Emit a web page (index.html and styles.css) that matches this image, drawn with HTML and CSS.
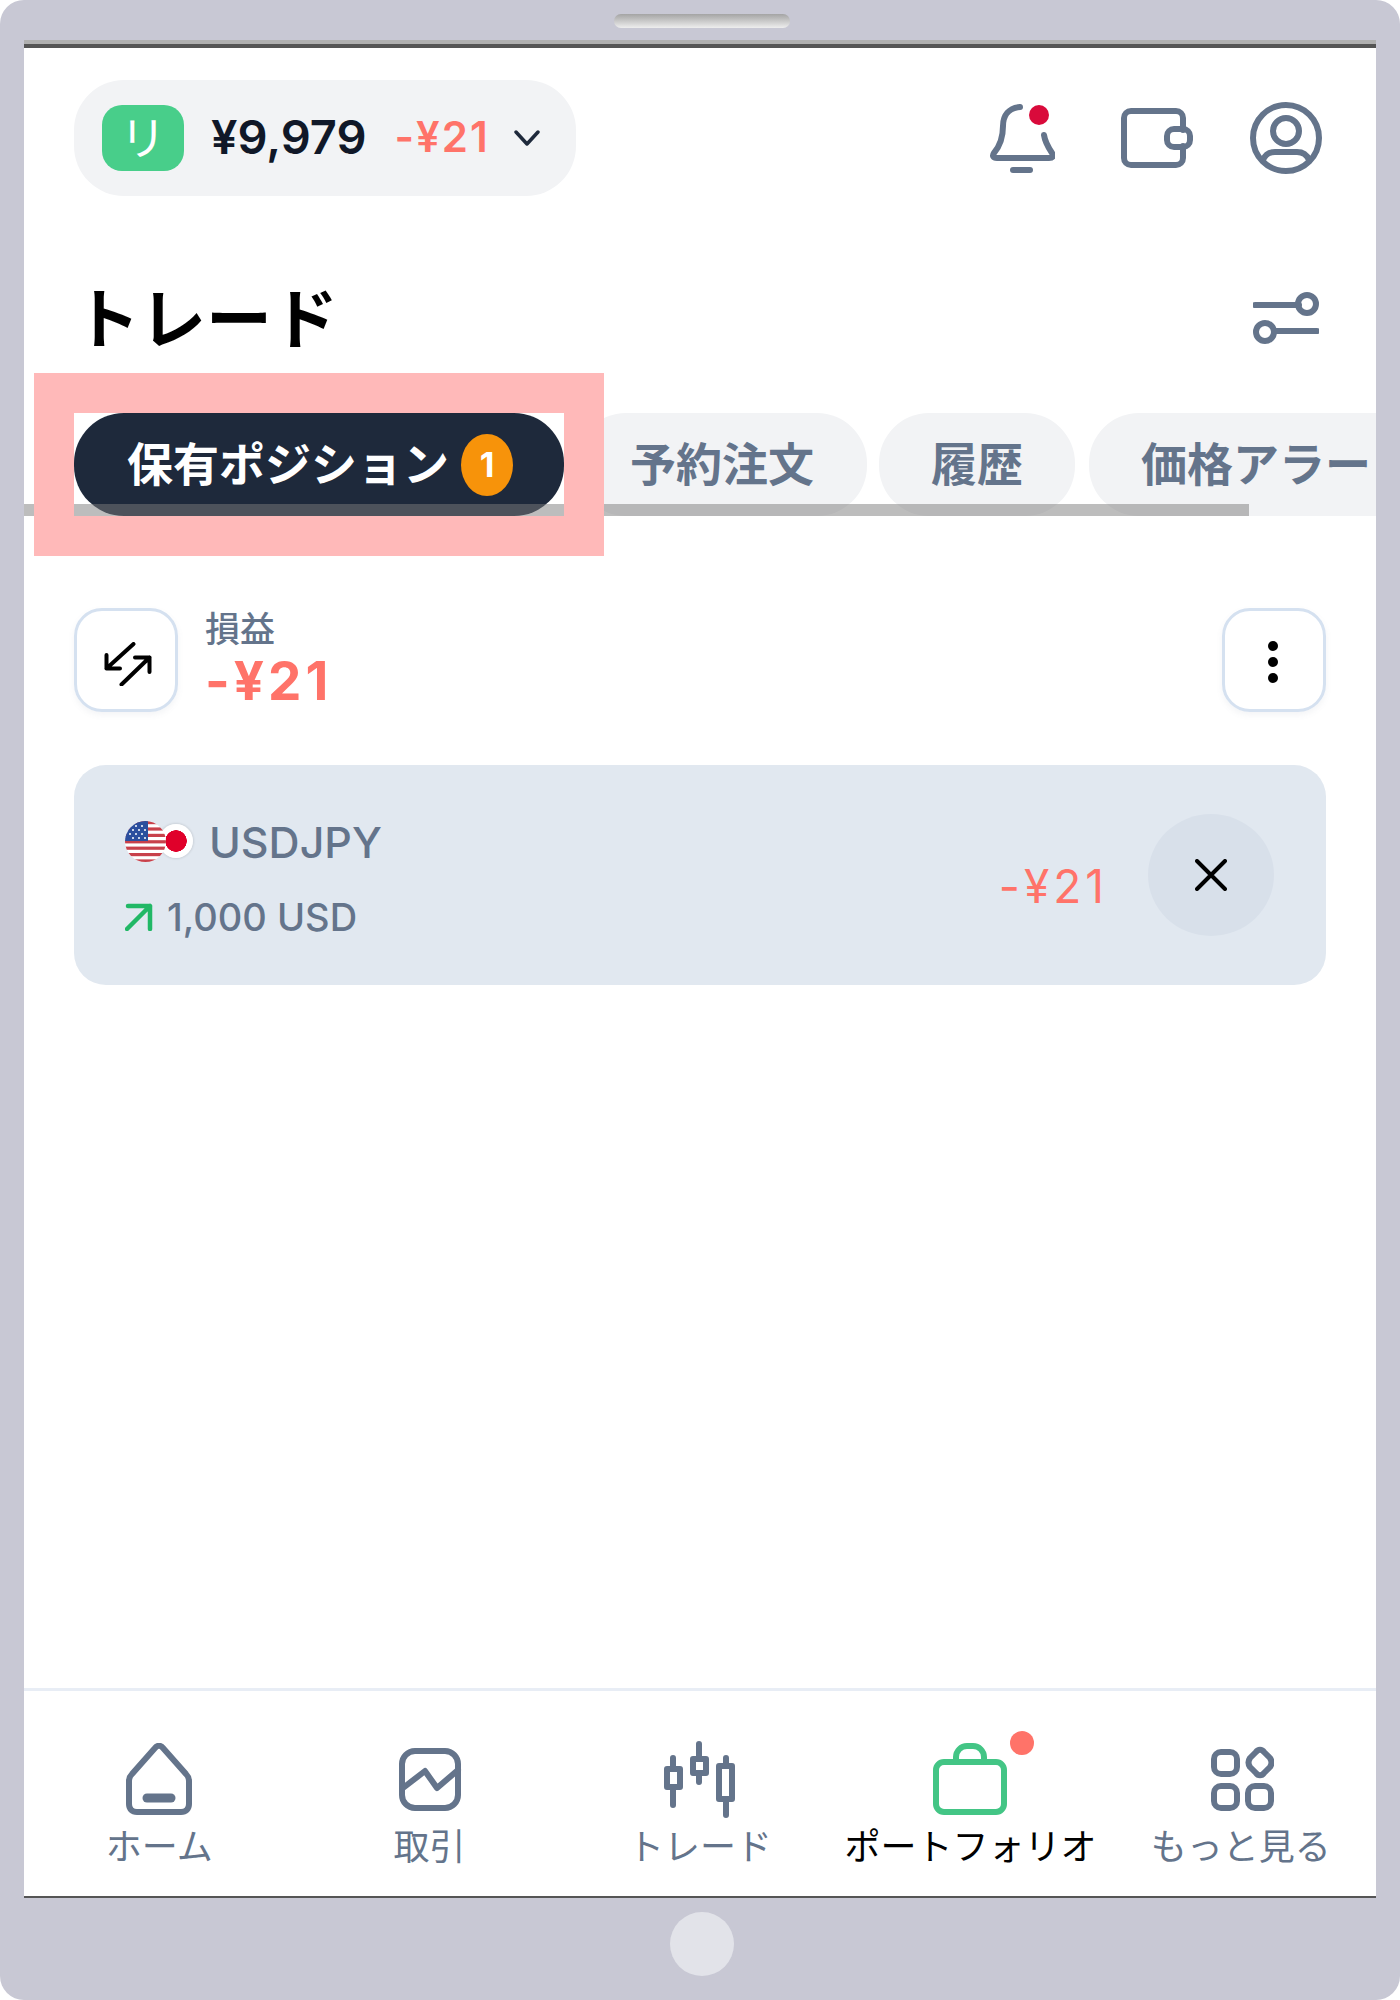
FILE: index.html
```html
<!DOCTYPE html>
<html lang="ja">
<head>
  <meta charset="UTF-8" />
  <title>トレード</title>
  <link rel="stylesheet" href="styles.css">
</head>
<body>
  <div class="device">
    <div class="bezel-top"><div class="speaker"></div></div>

    <div class="screen">
      <header class="topbar">
        <div class="account">
          <span class="account-badge">リ</span>
          <span class="balance">¥9,979</span>
          <span class="balance-pl">-¥21</span>
          <svg class="chevron" viewBox="0 0 26 16"><path d="M2 2l11 12L24 2" /></svg>
        </div>
        <div class="topbar-icons">
          <svg class="icon-bell" width="66" height="72" viewBox="0 0 66 72">
            <path d="M31 5C20 6 14 13 14 24 14 37 10 45 5 51 3 54 4 56 8 56H60C64 56 65 54 63 51 59 45 56 40 55 33" />
            <path d="M24 68H41" />
            <circle class="dot" cx="50" cy="13" r="10" />
          </svg>
          <svg class="icon-wallet" width="72" height="60" viewBox="0 0 72 60">
            <path d="M62 22V10c0-4-3-7-7-7H10c-4 0-7 3-7 7v40c0 4 3 7 7 7h45c4 0 7-3 7-7V38" />
            <rect x="46" y="21" width="23" height="18" rx="7" />
          </svg>
          <svg class="icon-user" width="72" height="72" viewBox="0 0 72 72">
            <circle cx="36" cy="36" r="33" />
            <circle cx="36" cy="29" r="13" />
            <path d="M13 58c2-5 6-8 12-8h22c6 0 10 3 12 8" />
          </svg>
        </div>
      </header>

      <div class="title-row">
        <h1>トレード</h1>
        <svg class="icon-sliders" width="66" height="54" viewBox="0 0 66 54">
          <path d="M2 14h44" />
          <circle cx="54" cy="13" r="9" />
          <circle cx="12" cy="41" r="9" />
          <path d="M21 40h43" />
        </svg>
      </div>

      <div class="tabs">
        <div class="tab-scrollbar"></div>
        <div class="tab-focus">
          <button class="tab tab-active"><span class="tab-label">保有ポジション</span><span class="tab-count">1</span></button>
        </div>
        <button class="tab tab-orders"><span class="tab-label">予約注文</span></button>
        <button class="tab"><span class="tab-label">履歴</span></button>
        <button class="tab tab-alerts"><span class="tab-label">価格アラー</span></button>
      </div>

      <section class="summary">
        <div class="square-btn">
          <svg class="icon-swap" width="48" height="44" viewBox="0 0 48 44">
            <path d="M29.5 2L2.5 26.5M2.5 13V26.5H16M17.5 42.5L45.5 15.5M31 15.5H45.5V30" />
          </svg>
        </div>
        <div class="summary-text">
          <div class="summary-label">損益</div>
          <div class="summary-value">-¥21</div>
        </div>
        <div class="square-btn square-btn-right">
          <span class="dots"><i></i><i></i><i></i></span>
        </div>
      </section>

      <section class="position">
        <div class="position-info">
          <div class="position-symbol">
            <span class="flags">
              <span class="flag-jp"></span>
              <svg class="flag-us" width="41" height="41" viewBox="0 0 41 41">
                <defs><clipPath id="round"><circle cx="20.5" cy="20.5" r="20.5" /></clipPath></defs>
                <g clip-path="url(#round)">
                  <rect width="41" height="41" fill="#fff" />
                  <rect y="0" width="41" height="3.2" fill="#c8414b" />
                  <rect y="6.4" width="41" height="3.2" fill="#c8414b" />
                  <rect y="12.8" width="41" height="3.2" fill="#c8414b" />
                  <rect y="19.2" width="41" height="3.2" fill="#c8414b" />
                  <rect y="25.6" width="41" height="3.2" fill="#c8414b" />
                  <rect y="32" width="41" height="3.2" fill="#c8414b" />
                  <rect y="38.4" width="41" height="2.6" fill="#c8414b" />
                  <rect width="23" height="20" fill="#2b4f9e" />
                  <g fill="#fff">
                    <circle cx="5" cy="5" r="1" /><circle cx="11" cy="5" r="1" /><circle cx="17" cy="5" r="1" />
                    <circle cx="8" cy="9" r="1" /><circle cx="14" cy="9" r="1" /><circle cx="20" cy="9" r="1" />
                    <circle cx="5" cy="13" r="1" /><circle cx="11" cy="13" r="1" /><circle cx="17" cy="13" r="1" />
                    <circle cx="8" cy="17" r="1" /><circle cx="14" cy="17" r="1" /><circle cx="20" cy="17" r="1" />
                  </g>
                </g>
              </svg>
            </span>
            USDJPY
          </div>
          <div class="position-size">
            <svg width="28" height="28" viewBox="0 0 28 28"><path d="M2 26L25 3M3 3h22v23" /></svg>
            1,000 USD
          </div>
        </div>
        <div class="position-pl">-¥21</div>
        <div class="close-btn">
          <svg width="32" height="32" viewBox="0 0 32 32"><path d="M2 2l28 28M30 2L2 30" /></svg>
        </div>
      </section>

      <nav class="bottom-nav">
        <div class="nav-item">
          <svg class="nav-icon" width="66" height="72" viewBox="0 0 66 72">
            <path d="M29 5L6 31c-2 2-3 4-3 7v23c0 5 3 8 8 8h44c5 0 8-3 8-8V38c0-3-1-5-3-7L37 5c-2-3-6-3-8 0z" />
            <path class="thick" d="M21 55h24" />
          </svg>
          <span>ホーム</span>
        </div>
        <div class="nav-item">
          <svg class="nav-icon" width="66" height="72" viewBox="0 0 66 72">
            <rect x="5" y="8" width="56" height="57" rx="13" />
            <path d="M6 45L28 28 40 45 61 27" />
          </svg>
          <span>取引</span>
        </div>
        <div class="nav-item">
          <svg class="nav-icon nav-icon-candle" width="78" height="84" viewBox="0 0 78 84">
            <path d="M12 20v8M12 52v15M38 6v12M38 38v6M65 20v5M65 64v13" />
            <rect x="6" y="31" width="13" height="18" />
            <rect x="32" y="21" width="13" height="14" />
            <rect x="58" y="28" width="13" height="33" />
          </svg>
          <span>トレード</span>
        </div>
        <div class="nav-item nav-item-active">
          <svg class="nav-icon" width="74" height="72" viewBox="0 0 74 72">
            <rect x="3" y="19" width="68" height="50" rx="8" />
            <path d="M23 19v-5c0-6 5-11 11-11h6c6 0 11 5 11 11v5" />
          </svg>
          <span class="nav-dot"></span>
          <span>ポートフォリオ</span>
        </div>
        <div class="nav-item">
          <svg class="nav-icon" width="66" height="72" viewBox="0 0 66 72">
            <rect x="6" y="9" width="23" height="22" rx="7" />
            <path d="M48 9L42 15c-2 3-2 6 0 9l6 6c2 3 6 3 8 0l6-6c2-3 2-6 0-9l-6-6c-2-3-6-3-8 0z" />
            <rect x="6" y="43" width="23" height="22" rx="7" />
            <rect x="40" y="43" width="23" height="22" rx="7" />
          </svg>
          <span>もっと見る</span>
        </div>
      </nav>
    </div>

    <div class="bezel-bottom"><div class="home-btn"></div></div>
  </div>
</body>
</html>
```

FILE: styles.css
```css
* {
  box-sizing: border-box;
}

body {
  margin: 0;
  background: #fff;
  font-family: "Noto Sans CJK JP", "Noto Sans", sans-serif;
}

svg {
  display: block;
  fill: none;
  stroke: #64748b;
  stroke-width: 6;
  stroke-linecap: round;
  stroke-linejoin: round;
}

.device {
  width: 1400px;
  height: 2000px;
  background: #c8c8d4;
  border-radius: 24px;
  display: flex;
  flex-direction: column;
  overflow: hidden;
}

.bezel-top {
  height: 40px;
  padding: 14px 0 0 4px;
  flex: none;
}

.speaker {
  width: 176px;
  height: 14px;
  margin: 0 auto;
  border-radius: 7px;
  background: linear-gradient(#a4a4a4, #eee);
}

.screen {
  height: 1854px;
  margin: 4px 24px 0;
  flex: none;
  background: #fff;
  border-top: 4px solid #555;
  border-bottom: 2px solid #555;
  box-shadow: 0 -4px 0 #b0b0b0;
  display: flex;
  flex-direction: column;
  overflow: hidden;
}

.bezel-bottom {
  flex: 1;
  display: flex;
  justify-content: center;
  padding: 14px 0 0 4px;
}

.home-btn {
  width: 64px;
  height: 64px;
  border-radius: 50%;
  background: #e2e3e9;
}

/* top bar */
.topbar {
  display: flex;
  justify-content: space-between;
  align-items: center;
  padding: 32px 54px 0 50px;
}

.account {
  width: 502px;
  height: 116px;
  border-radius: 50px;
  background: #f2f3f5;
  display: flex;
  align-items: center;
  padding-left: 28px;
}

.account-badge {
  width: 82px;
  height: 66px;
  padding-bottom: 7px;
  border-radius: 20px;
  background: #48ce8a;
  color: #fff;
  font-size: 46px;
  line-height: 50px;
  display: flex;
  align-items: center;
  justify-content: center;
}

.balance {
  margin: 0 0 4px 27px;
  font-family: Inter, sans-serif;
  font-size: 47px;
  font-weight: 600;
  color: #101828;
}

.balance-pl {
  margin: 0 0 4px 28px;
  font-family: Inter, sans-serif;
  font-size: 42px;
  font-weight: 600;
  letter-spacing: 2px;
  color: #ff7369;
}

.chevron {
  width: 26px;
  height: 16px;
  margin-left: 24px;
  stroke: #1e293b;
  stroke-width: 3.5;
}

.topbar-icons {
  display: flex;
  align-items: center;
  gap: 57px;
}

.icon-bell {
  margin-right: 9px;
}

.icon-bell .dot {
  fill: #d90a3b;
  stroke: none;
}

/* title */
.title-row {
  display: flex;
  justify-content: space-between;
  align-items: center;
  height: 80px;
  margin-top: 78px;
  padding: 0 57px 0 50px;
}

.icon-sliders {
  margin-top: 8px;
}

h1 {
  margin: 0;
  font-size: 66px;
  font-weight: 700;
  line-height: 80px;
  color: #000;
}

/* tabs */
.tabs {
  display: flex;
  gap: 12px;
  margin-top: 59px;
  padding-left: 50px;
  position: relative;
}

.tab {
  height: 103px;
  padding: 0 52px;
  border: none;
  border-radius: 50px;
  background: #f2f3f5;
  color: #64748b;
  font-family: inherit;
  font-size: 46px;
  font-weight: 700;
  white-space: nowrap;
  flex: none;
  display: flex;
  align-items: center;
}

.tab-label {
  margin-bottom: 8px;
}

.tab-scrollbar {
  position: absolute;
  left: 0;
  bottom: 0;
  width: 1225px;
  height: 12px;
  background: rgba(124, 124, 124, 0.5);
  z-index: 1;
}

.tab-focus {
  position: relative;
  z-index: 2;
  flex: none;
  background: #fff;
  outline: 40px solid #ffb9b9;
}

.tab-focus::after {
  content: "";
  position: absolute;
  left: 0;
  right: 0;
  bottom: 0;
  height: 12px;
  background: rgba(124, 124, 124, 0.5);
}

.tab-active {
  width: 490px;
  padding: 0 0 0 53px;
  background: #1e293b;
  color: #fff;
}

.tab-count {
  width: 52px;
  height: 62px;
  margin-left: 12px;
  border-radius: 50%;
  background: #f7930a;
  font-family: Inter, sans-serif;
  font-size: 34px;
  font-weight: 700;
  display: flex;
  align-items: center;
  justify-content: center;
}

.tab-orders {
  padding-left: 54px;
  padding-right: 53px;
}

.tab-alerts {
  margin-left: 2px;
}

/* summary */
.summary {
  display: flex;
  align-items: center;
  margin-top: 92px;
  padding: 0 50px;
}

.square-btn {
  width: 104px;
  height: 104px;
  border: 3px solid #d5e1f0;
  border-radius: 28px;
  box-shadow: 0 3px 6px rgba(100, 116, 139, 0.08);
  display: flex;
  align-items: center;
  justify-content: center;
  flex: none;
}

.square-btn svg {
  stroke: #000;
  stroke-width: 4;
}

.icon-swap {
  margin: 7px 0 0 3px;
}

.square-btn-right {
  margin-left: auto;
}

.dots {
  display: flex;
  flex-direction: column;
  gap: 6px;
  margin: 4px 3px 0 0;
}

.dots i {
  width: 10px;
  height: 10px;
  border-radius: 50%;
  background: #000;
}

.summary-text {
  margin: -8px 0 0 27px;
}

.summary-label {
  font-size: 35px;
  line-height: 44px;
  font-weight: 500;
  color: #64748b;
}

.summary-value {
  margin-top: 5px;
  font-family: Inter, sans-serif;
  font-size: 53px;
  line-height: 54px;
  font-weight: 700;
  letter-spacing: 4px;
  color: #ff7369;
}

/* position card */
.position {
  height: 220px;
  margin: 53px 50px 0;
  padding: 0 52px 0 51px;
  border-radius: 32px;
  background: #e1e8f0;
  display: flex;
  align-items: center;
}

.position-info {
  margin-top: 5px;
}

.position-symbol {
  display: flex;
  align-items: center;
  font-family: Inter, sans-serif;
  font-size: 43px;
  font-weight: 500;
  color: #64748b;
}

.flags {
  width: 84px;
  height: 41px;
  position: relative;
  flex: none;
}

.flag-us {
  position: absolute;
  left: 0;
  top: 0;
  stroke: none;
}

.flag-jp {
  position: absolute;
  left: 34px;
  top: 3px;
  width: 34px;
  height: 34px;
  border-radius: 50%;
  background: radial-gradient(circle, #e0002a 0 10.5px, #fff 11px);
  box-shadow: 0 0 3px rgba(0, 0, 0, 0.2);
}

.position-size {
  display: flex;
  align-items: center;
  gap: 14px;
  margin-top: 26px;
  font-family: Inter, sans-serif;
  font-size: 38px;
  font-weight: 500;
  color: #64748b;
}

.position-size svg {
  stroke: #21b866;
  stroke-width: 4.5;
}

.position-pl {
  margin-left: auto;
  margin-top: 22px;
  font-family: Inter, sans-serif;
  font-size: 46px;
  font-weight: 400;
  letter-spacing: 4px;
  color: #ff7369;
}

.close-btn {
  width: 126px;
  height: 122px;
  margin-left: 40px;
  border-radius: 50%;
  background: #d8e0ea;
  display: flex;
  align-items: center;
  justify-content: center;
}

.close-btn svg {
  stroke: #000;
  stroke-width: 4;
}

/* bottom nav */
.bottom-nav {
  margin-top: auto;
  height: 208px;
  border-top: 3px solid #e8edf5;
  display: grid;
  grid-template-columns: repeat(5, 1fr);
}

.nav-item {
  position: relative;
  display: flex;
  flex-direction: column;
  align-items: center;
  justify-content: flex-end;
  padding-bottom: 29px;
  font-size: 36px;
  line-height: 46px;
  color: #64748b;
}

.nav-icon {
  margin-bottom: 6px;
}

.nav-icon-candle {
  margin-bottom: -1px;
}

.nav-icon .thick {
  stroke-width: 9;
}

.nav-item-active {
  color: #000;
}

.nav-item-active .nav-icon {
  stroke: #43c585;
}

.nav-dot {
  position: absolute;
  top: 40px;
  left: calc(50% + 40px);
  width: 24px;
  height: 24px;
  border-radius: 50%;
  background: #ff7369;
}
```
